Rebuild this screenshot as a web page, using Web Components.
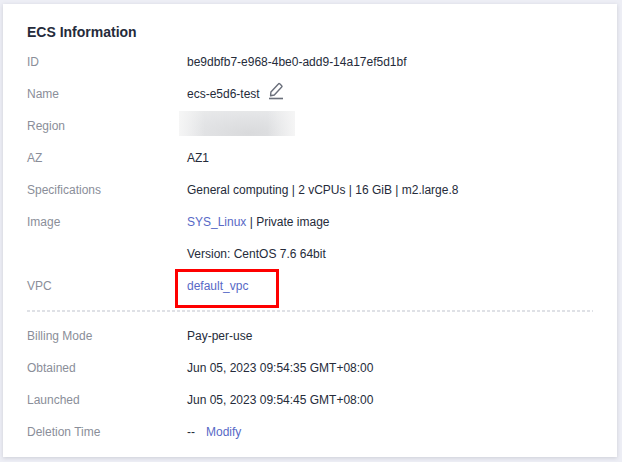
<!DOCTYPE html>
<html lang="en">
<head>
<meta charset="UTF-8">
<meta name="viewport" content="width=device-width, initial-scale=1">
<title>ECS Information</title>
<style>
    body {
        margin: 0;
        padding: 4px 5px 5px 3px;
        background: #edeef5;
        color: #252b3a;
        font: 12px/32px "Liberation Sans", Arial, sans-serif;
    }
</style>
</head>
<body>
<info-card heading="ECS Information">
    <info-row label="ID">be9dbfb7-e968-4be0-add9-14a17ef5d1bf</info-row>
    <info-row label="Name">ecs-e5d6-test<edit-button></edit-button></info-row>
    <info-row label="Region"><masked-value></masked-value></info-row>
    <info-row label="AZ">AZ1</info-row>
    <info-row label="Specifications">General computing | 2 vCPUs | 16 GiB | m2.large.8</info-row>
    <info-row label="Image"><span><text-link>SYS_Linux</text-link> | Private image</span></info-row>
    <info-row>Version: CentOS 7.6 64bit</info-row>
    <info-row label="VPC"><text-link marked>default_vpc</text-link></info-row>
    <info-divider></info-divider>
    <info-row label="Billing Mode">Pay-per-use</info-row>
    <info-row label="Obtained">Jun 05, 2023 09:54:35 GMT+08:00</info-row>
    <info-row label="Launched">Jun 05, 2023 09:54:45 GMT+08:00</info-row>
    <info-row label="Deletion Time">--<text-link spaced>Modify</text-link></info-row>
</info-card>

<script>
class InfoCard extends HTMLElement {
    constructor() {
        super();
        this.attachShadow({ mode: 'open' });
    }

    connectedCallback() {
        const heading = this.getAttribute('heading') || '';

        this.shadowRoot.innerHTML = `
            <style>
                :host {
                    display: block;
                    padding: 16px 24px 9px;
                    background: #fff;
                    box-shadow: 0 1px 4px rgba(37, 43, 58, 0.16);
                }

                h2 {
                    margin: 0 0 2px;
                    font-size: 14px;
                    line-height: 24px;
                    font-weight: 700;
                }
            </style>
            <h2>${heading}</h2>
            <slot></slot>
        `;
    }
}

class InfoRow extends HTMLElement {
    constructor() {
        super();
        this.attachShadow({ mode: 'open' });
    }

    connectedCallback() {
        const label = this.getAttribute('label') || '';

        this.shadowRoot.innerHTML = `
            <style>
                :host {
                    display: grid;
                    grid-template-columns: 160px 1fr;
                }

                .label {
                    color: #8a8e99;
                }

                .value {
                    display: flex;
                    align-items: center;
                    min-height: 32px;
                }
            </style>
            <div class="label">${label}</div>
            <div class="value"><slot></slot></div>
        `;
    }
}

class InfoDivider extends HTMLElement {
    constructor() {
        super();
        this.attachShadow({ mode: 'open' });
    }

    connectedCallback() {
        this.shadowRoot.innerHTML = `
            <style>
                :host {
                    display: block;
                    height: 2px;
                    margin: 8px 0;
                    background: repeating-linear-gradient(90deg, #dfe1e6 0 3px, transparent 3px 5px);
                }
            </style>
        `;
    }
}

class TextLink extends HTMLElement {
    constructor() {
        super();
        this.attachShadow({ mode: 'open' });
    }

    connectedCallback() {
        this.shadowRoot.innerHTML = `
            <style>
                :host {
                    display: inline-block;
                    position: relative;
                }

                :host([spaced]) {
                    margin-left: 11px;
                }

                /* callout frame drawn over the row */
                :host([marked])::after {
                    content: "";
                    position: absolute;
                    inset: -1px -31px -6px -12px;
                    border: 3px solid #fe0000;
                    pointer-events: none;
                }

                a {
                    color: #5869c6;
                    text-decoration: none;
                }
            </style>
            <a href="#"><slot></slot></a>
        `;
    }
}

class EditButton extends HTMLElement {
    constructor() {
        super();
        this.attachShadow({ mode: 'open' });
    }

    connectedCallback() {
        this.shadowRoot.innerHTML = `
            <style>
                :host {
                    display: flex;
                    margin-left: 8px;
                    padding-bottom: 6px;
                }

                button {
                    display: flex;
                    padding: 0;
                    border: 0;
                    background: none;
                    cursor: pointer;
                }
            </style>
            <button type="button" aria-label="Edit name">
                <svg width="16" height="18" viewBox="0 0 16 18" fill="none" stroke="#6a6f7b">
                    <path d="M2.6 13.8 L2.9 10 L10.4 1.9 Q11 1.2 11.7 1.8 L13.7 3.7 Q14.4 4.4 13.7 5.1 L6.3 13 Z" stroke-width="1.4" stroke-linejoin="round"/>
                    <path d="M1 16.5 H15" stroke-width="1.6"/>
                </svg>
            </button>
        `;
    }
}

class MaskedValue extends HTMLElement {
    constructor() {
        super();
        this.attachShadow({ mode: 'open' });
    }

    connectedCallback() {
        this.shadowRoot.innerHTML = `
            <style>
                :host {
                    display: block;
                    width: 116px;
                    height: 25px;
                    margin: 0 0 5px -8px;
                    background:
                        linear-gradient(90deg, rgba(247, 247, 247, 0.9), rgba(247, 247, 247, 0) 22% 76%, rgba(247, 247, 247, 0.9)),
                        radial-gradient(ellipse at 60% 90%, #d9dadc, #e4e5e7 60%, #ebecec);
                }
            </style>
        `;
    }
}

customElements.define('info-card', InfoCard);
customElements.define('info-row', InfoRow);
customElements.define('info-divider', InfoDivider);
customElements.define('text-link', TextLink);
customElements.define('edit-button', EditButton);
customElements.define('masked-value', MaskedValue);
</script>
</body>
</html>
